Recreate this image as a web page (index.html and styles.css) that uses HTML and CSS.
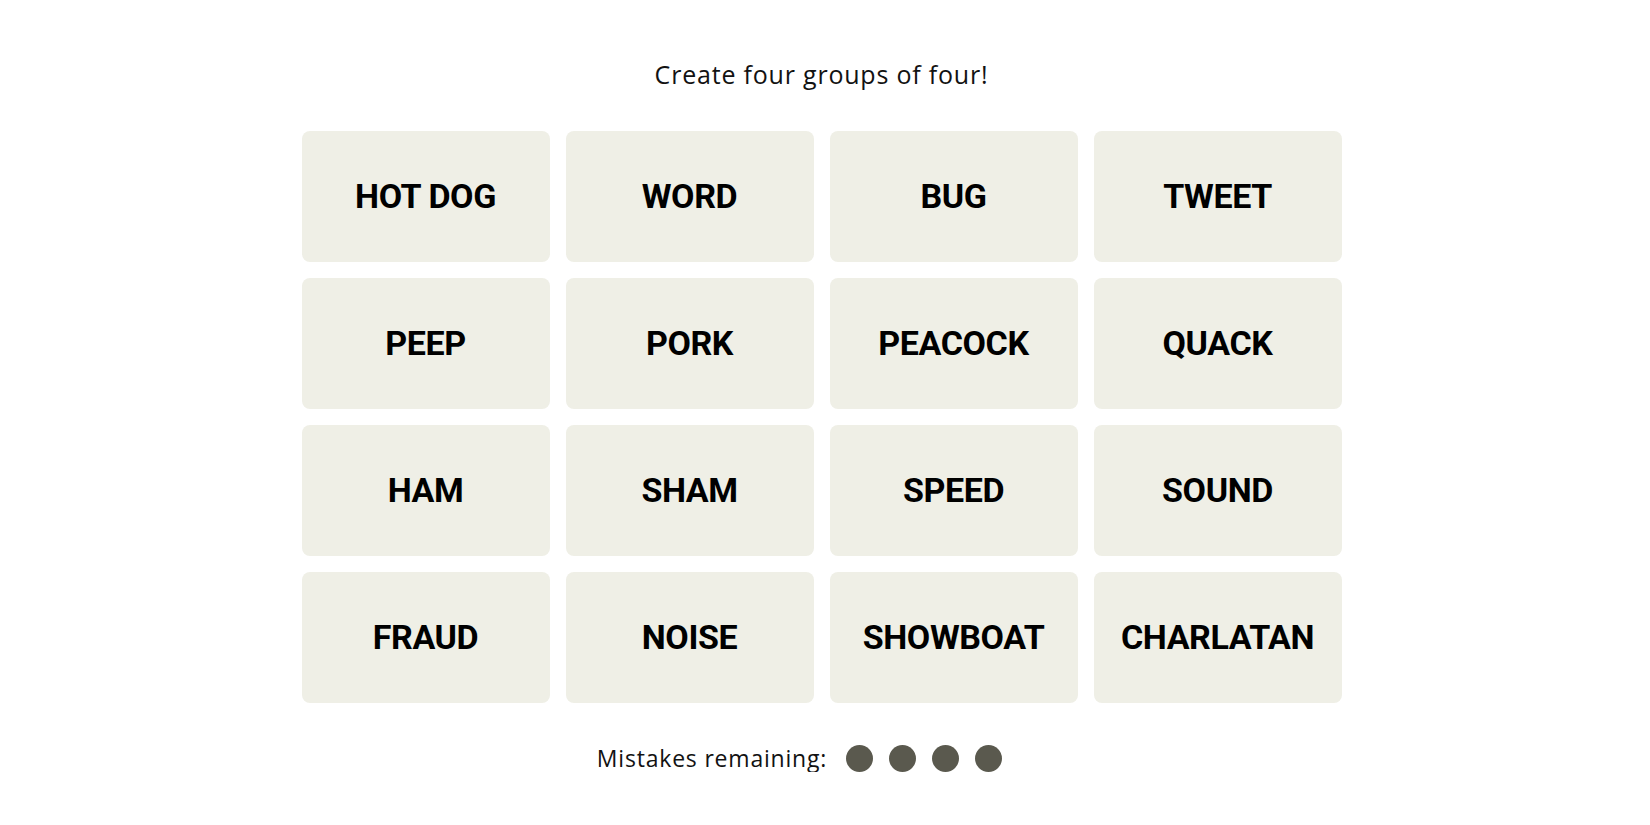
FILE: index.html
```html
<!DOCTYPE html>
<html lang="en">
<head>
<meta charset="utf-8">
<title>Connections</title>
<link rel="stylesheet" href="styles.css">
</head>
<body>
<main class="game">
  <p class="prompt">Create four groups of four!</p>
  <div class="board">
    <button class="tile">HOT DOG</button>
    <button class="tile">WORD</button>
    <button class="tile">BUG</button>
    <button class="tile">TWEET</button>
    <button class="tile">PEEP</button>
    <button class="tile">PORK</button>
    <button class="tile">PEACOCK</button>
    <button class="tile">QUACK</button>
    <button class="tile">HAM</button>
    <button class="tile">SHAM</button>
    <button class="tile">SPEED</button>
    <button class="tile">SOUND</button>
    <button class="tile">FRAUD</button>
    <button class="tile">NOISE</button>
    <button class="tile">SHOWBOAT</button>
    <button class="tile">CHARLATAN</button>
  </div>
  <div class="mistakes">
    <span class="mistakes-label">Mistakes remaining:</span>
    <span class="dots">
      <span class="dot"></span>
      <span class="dot"></span>
      <span class="dot"></span>
      <span class="dot"></span>
    </span>
  </div>
</main>
</body>
</html>
```

FILE: styles.css
```css
html, body {
  margin: 0;
  padding: 0;
  background: #ffffff;
}

.game {
  display: flex;
  flex-direction: column;
  align-items: center;
  padding-right: 7px;
  font-family: "Open Sans", Roboto, sans-serif;
  color: #121212;
}

.prompt {
  margin: 0;
  padding-top: 56px;
  font-size: 25px;
  line-height: 36px;
  font-weight: 400;
  letter-spacing: 0.8px;
  color: #121212;
}

.board {
  margin-top: 39px;
  display: grid;
  grid-template-columns: repeat(4, 248px);
  grid-auto-rows: 131px;
  gap: 16px;
}

.tile {
  border: 0;
  margin: 0;
  padding: 0 0 2px;
  background: #efefe6;
  border-radius: 8px;
  font-family: Roboto, "Liberation Sans", sans-serif;
  font-weight: 700;
  font-size: 34px;
  letter-spacing: -0.4px;
  color: #000000;
  text-transform: uppercase;
}

.mistakes {
  margin-top: 41px;
  display: flex;
  align-items: center;
  padding-right: 44px;
  height: 28px;
}

.mistakes-label {
  font-size: 23px;
  font-weight: 400;
  letter-spacing: 0.8px;
  color: #121212;
  margin-right: 19px;
}

.dots {
  display: flex;
  gap: 16px;
}

.dot {
  width: 27px;
  height: 27px;
  border-radius: 50%;
  background: #5a594e;
}
```
